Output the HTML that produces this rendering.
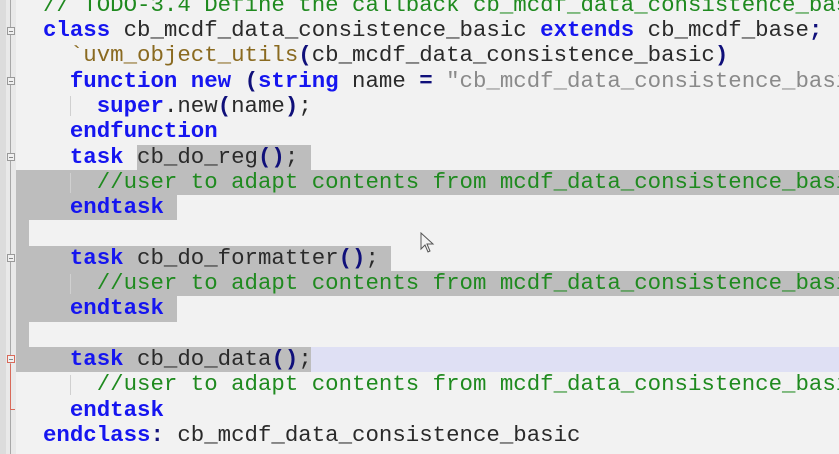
<!DOCTYPE html>
<html><head><meta charset="utf-8"><style>
*{margin:0;padding:0;box-sizing:border-box}
html,body{width:839px;height:454px;overflow:hidden;background:#f2f2f2}
body{position:relative;font-family:"Liberation Mono","Courier New",monospace;font-size:22.4px}
.g1{position:absolute;left:0;top:0;width:6px;height:454px;background:#dcdcdc}
.g2{position:absolute;left:6px;top:0;width:10px;height:454px;background:#e9e9e9}
.gl{position:absolute;left:10px;top:0;width:1px;height:454px;background:#a8a8a8}
.fb{position:absolute;left:7px;width:8px;height:8px;border:1px solid #999;background:#f0f0f0}
.fb:after{content:"";position:absolute;left:1px;top:3px;width:4px;height:1px;background:#888}
.sel{position:absolute;background:#bdbdbd;height:25.3px}
.l{position:absolute;left:43px;white-space:pre;line-height:25.3px;height:25.3px;color:#2a2a2a}
.k{color:#1515f0;font-weight:bold}
.p{color:#10107a;font-weight:bold}
.c{color:#1f8a1f}
.s{color:#8a8a8a}
.ig{position:absolute;left:70px;width:1px;height:20px;background:#d0d0d0}
</style></head><body>
<div class="g1"></div><div class="g2"></div><div class="gl"></div>
<div class="sel" style="left:137px;top:144.5px;width:174px"></div>
<div class="sel" style="left:16px;top:169.8px;width:823px"></div>
<div class="sel" style="left:16px;top:195.1px;width:161px"></div>
<div class="sel" style="left:16px;top:220.4px;width:13px"></div>
<div class="sel" style="left:16px;top:245.7px;width:375px"></div>
<div class="sel" style="left:16px;top:271px;width:823px"></div>
<div class="sel" style="left:16px;top:296.3px;width:161px"></div>
<div class="sel" style="left:16px;top:321.6px;width:13px"></div>
<div class="sel" style="left:16px;top:346.9px;width:295px"></div>
<div class="sel" style="left:311px;top:346.9px;width:528px;background:#dfe0f4"></div>
<div class="fb" style="top:27px"></div>
<div class="fb" style="top:77px"></div>
<div class="fb" style="top:153px"></div>
<div class="fb" style="top:254px"></div>
<div class="fb" style="top:355px;border-color:#d86a5a"></div>
<div style="position:absolute;left:10px;top:364px;width:1px;height:46px;background:#d86a5a"></div>
<div style="position:absolute;left:10px;top:409px;width:5px;height:1px;background:#d86a5a"></div>
<div class="ig" style="top:96px"></div>
<div class="ig" style="top:173px"></div>
<div class="ig" style="top:274px"></div>
<div class="ig" style="top:375px"></div>
<div class="l" style="top:-7.3px"><span class="c">// TODO-3.4 Define the callback cb_mcdf_data_consistence_basic</span></div>
<div class="l" style="top:18px"><span class="k">class</span> cb_mcdf_data_consistence_basic <span class="k">extends</span> cb_mcdf_base<span class="p">;</span></div>
<div class="l" style="top:43.3px">  <span style="color:#8a6a20">`uvm_object_utils</span><span class="p">(</span>cb_mcdf_data_consistence_basic<span class="p">)</span></div>
<div class="l" style="top:68.6px">  <span class="k">function new</span> <span class="p">(</span><span class="k">string</span> name <span class="p">=</span> <span class="s">"cb_mcdf_data_consistence_basic"</span></div>
<div class="l" style="top:93.9px">    <span class="k">super</span>.new<span class="p">(</span>name<span class="p">)</span>;</div>
<div class="l" style="top:119.2px">  <span class="k">endfunction</span></div>
<div class="l" style="top:144.5px">  <span class="k">task</span> cb_do_reg<span class="p">()</span>;</div>
<div class="l" style="top:169.8px">    <span class="c">//user to adapt contents from mcdf_data_consistence_basic</span></div>
<div class="l" style="top:195.1px">  <span class="k">endtask</span></div>
<div class="l" style="top:245.7px">  <span class="k">task</span> cb_do_formatter<span class="p">()</span>;</div>
<div class="l" style="top:271px">    <span class="c">//user to adapt contents from mcdf_data_consistence_basic</span></div>
<div class="l" style="top:296.3px">  <span class="k">endtask</span></div>
<div class="l" style="top:346.9px">  <span class="k">task</span> cb_do_data<span class="p">()</span>;</div>
<div class="l" style="top:372.2px">    <span class="c">//user to adapt contents from mcdf_data_consistence_basic</span></div>
<div class="l" style="top:397.5px">  <span class="k">endtask</span></div>
<div class="l" style="top:422.8px"><span class="k">endclass</span><span class="p">:</span> cb_mcdf_data_consistence_basic</div>
<svg style="position:absolute;left:420px;top:232px" width="16" height="22" viewBox="0 0 16 22"><path d="M1 1 L1 17 L5 13 L8 20 L10 19 L7 12 L13 12 Z" fill="#f2f2f2" stroke="#555" stroke-width="1"/></svg>
</body></html>
